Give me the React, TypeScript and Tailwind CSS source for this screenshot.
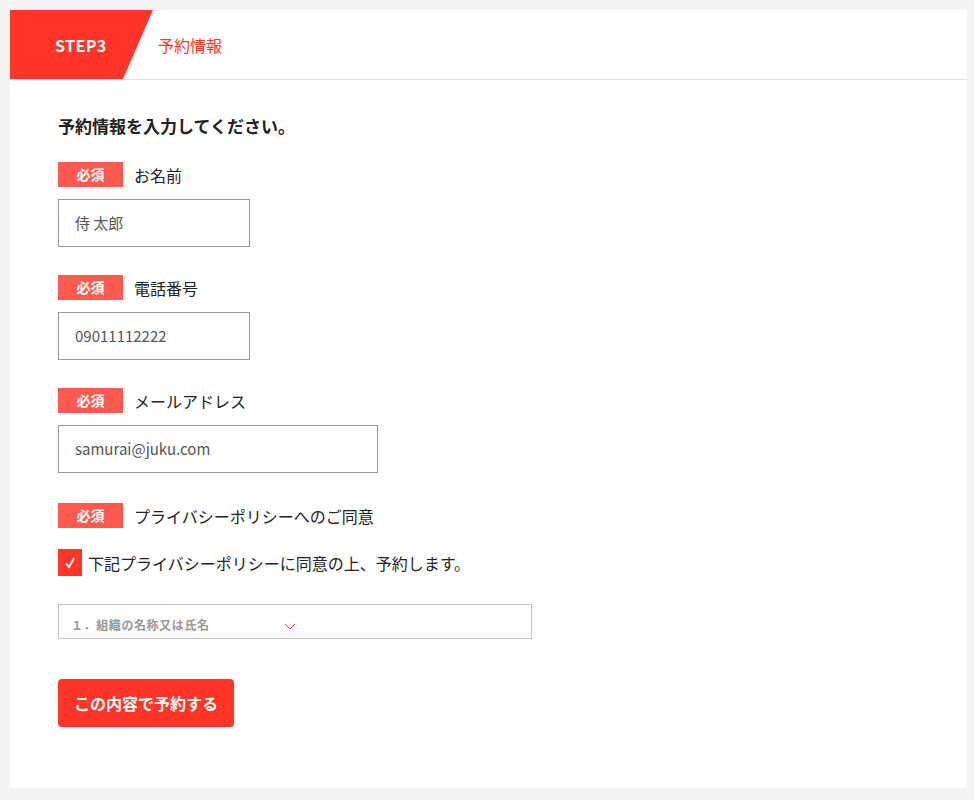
export default function App() {
  const font = { fontFamily: '"Noto Sans CJK JP", "Noto Sans", sans-serif' }
  const Badge = () => (
    <span className="inline-flex h-[25px] w-[65px] items-center justify-center bg-[#ff5a4f] text-[14px] font-bold text-white">必須</span>
  )
  const Label = ({ text }: { text: string }) => (
    <div className="flex items-center gap-[11px]">
      <Badge />
      <span className="text-[16px] text-[#222]">{text}</span>
    </div>
  )
  return (
    <div className="min-h-[800px] bg-[#f4f4f4] p-[10px] pr-[7px] pb-[12px]" style={font}>
      <div className="h-[778px] bg-white">
        <div className="flex h-[70px] items-center border-b border-[#e3e3e3]">
          <div className="flex h-full w-[143px] items-center bg-[#ff3529] pl-[45px] text-[16px] font-bold tracking-wide text-white [clip-path:polygon(0_0,100%_0,79%_100%,0_100%)]">
            STEP3
          </div>
          <span className="ml-[5px] text-[16px] text-[#ff3529]">予約情報</span>
        </div>
        <div className="px-[48px] pt-[34px]">
          <h1 className="text-[17px] font-bold leading-[24px] text-[#222]">予約情報を入力してください。</h1>
          <div className="mt-[24px]"><Label text="お名前" /></div>
          <div className="mt-[12px] flex h-[48px] w-[192px] items-center border border-[#999] px-[16px] text-[15px] text-[#555]">侍 太郎</div>
          <div className="mt-[28px]"><Label text="電話番号" /></div>
          <div className="mt-[12px] flex h-[48px] w-[192px] items-center border border-[#999] px-[16px] text-[15px] text-[#555]">09011112222</div>
          <div className="mt-[28px]"><Label text="メールアドレス" /></div>
          <div className="mt-[12px] flex h-[48px] w-[320px] items-center border border-[#999] px-[16px] text-[15px] text-[#555]">samurai@juku.com</div>
          <div className="mt-[30px]"><Label text="プライバシーポリシーへのご同意" /></div>
          <div className="mt-[21px] flex items-center gap-[6px]">
            <span className="flex h-[27px] w-[24px] items-center justify-center bg-[#ff3529]">
              <svg width="12" height="12" viewBox="0 0 12 12" fill="none" stroke="white" strokeWidth="2"><path d="M2 6.5l3 3.5 5-9" /></svg>
            </span>
            <span className="text-[16px] text-[#222]">下記プライバシーポリシーに同意の上、予約します。</span>
          </div>
          <div className="mt-[28px] flex h-[35px] w-[474px] items-center border border-[#c4c4c4] pl-[12px] pt-[6px]">
            <span className="w-[200px] text-[12px] font-bold tracking-wider text-[#999]">１．組織の名称又は氏名</span>
            <svg className="ml-[13px] mt-[4px]" width="12" height="8" viewBox="0 0 12 8" fill="none" stroke="#ff3529" strokeWidth="1"><path d="M1 1l5 5 5-5" /></svg>
          </div>
          <button className="mt-[40px] h-[48px] w-[176px] rounded-[4px] bg-[#ff3529] text-[16px] font-bold text-white">この内容で予約する</button>
        </div>
      </div>
    </div>
  )
}
